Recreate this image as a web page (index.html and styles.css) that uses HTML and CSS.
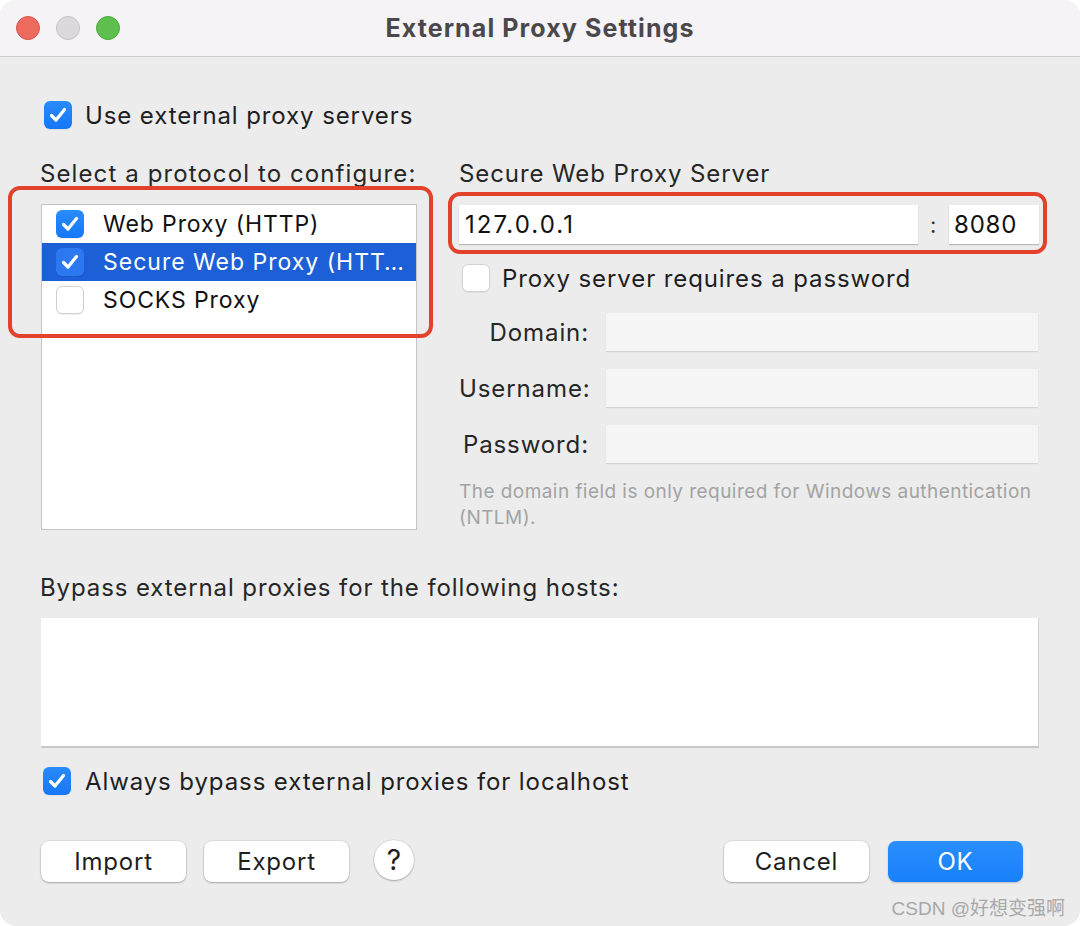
FILE: index.html
```html
<!DOCTYPE html>
<html lang="en">
<head>
    <meta charset="UTF-8">
    <meta name="viewport" content="width=device-width, initial-scale=1.0">
    <title>External Proxy Settings</title>
    <link rel="stylesheet" href="styles.css">
</head>
<body>
    <div class="window">
        <!-- Title bar -->
        <div class="titlebar">
            <div class="lights">
                <span class="light red"></span>
                <span class="light grey"></span>
                <span class="light green"></span>
            </div>
            <div class="title">External Proxy Settings</div>
        </div>

        <div class="content">
            <label class="check-row top-check">
                <span class="check on">
                    <svg viewBox="0 0 28 28"><path d="M7.5 14.5 L12 19 L20.5 8.5"/></svg>
                </span>
                Use external proxy servers
            </label>

            <div class="columns">
                <div class="left-col">
                    <div class="heading">Select a protocol to configure:</div>
                    <div class="protocol-list">
                        <div class="protocol">
                            <span class="check on">
                                <svg viewBox="0 0 28 28"><path d="M7.5 14.5 L12 19 L20.5 8.5"/></svg>
                            </span>
                            <span class="protocol-name">Web Proxy (HTTP)</span>
                        </div>
                        <div class="protocol selected">
                            <span class="check on">
                                <svg viewBox="0 0 28 28"><path d="M7.5 14.5 L12 19 L20.5 8.5"/></svg>
                            </span>
                            <span class="protocol-name">Secure Web Proxy (HTT…</span>
                        </div>
                        <div class="protocol">
                            <span class="check"></span>
                            <span class="protocol-name">SOCKS Proxy</span>
                        </div>
                    </div>
                </div>

                <div class="right-col">
                    <div class="heading">Secure Web Proxy Server</div>
                    <div class="server-row">
                        <div class="field host">127.0.0.1</div>
                        <span class="colon">:</span>
                        <div class="field port">8080</div>
                    </div>

                    <label class="check-row pass-check">
                        <span class="check"></span>
                        Proxy server requires a password
                    </label>

                    <div class="auth-grid">
                        <span class="auth-label">Domain:</span>
                        <div class="field dim"></div>
                        <span class="auth-label">Username:</span>
                        <div class="field dim"></div>
                        <span class="auth-label">Password:</span>
                        <div class="field dim"></div>
                    </div>

                    <p class="hint">The domain field is only required for Windows authentication (NTLM).</p>
                </div>
            </div>

            <div class="heading bypass-heading">Bypass external proxies for the following hosts:</div>
            <div class="bypass-box"></div>

            <label class="check-row local-check">
                <span class="check on">
                    <svg viewBox="0 0 28 28"><path d="M7.5 14.5 L12 19 L20.5 8.5"/></svg>
                </span>
                Always bypass external proxies for localhost
            </label>

            <div class="buttons">
                <div class="btn-group">
                    <button class="btn">Import</button>
                    <button class="btn">Export</button>
                    <button class="btn help">?</button>
                </div>
                <div class="btn-group">
                    <button class="btn">Cancel</button>
                    <button class="btn primary">OK</button>
                </div>
            </div>
        </div>

        <!-- annotations drawn over the dialog -->
        <div class="mark mark-list"></div>
        <div class="mark mark-server"></div>

        <div class="watermark">CSDN @好想变强啊</div>
    </div>
</body>
</html>
```

FILE: styles.css
```css
* {
    margin: 0;
    padding: 0;
    box-sizing: border-box;
}

body {
    background: #ffffff;
    font-family: 'Inter', 'Noto Sans', sans-serif;
    color: #1e1e1e;
    letter-spacing: 0.9px;
}

.window {
    position: relative;
    width: 1080px;
    height: 926px;
    background-color: #ececec;
    border-radius: 16px;
    overflow: hidden;
}

.titlebar {
    position: relative;
    height: 57px;
    background-color: #f6f3f6;
    border-bottom: 1px solid #cdcbcd;
    display: flex;
    align-items: center;
    justify-content: center;
}

.lights {
    position: absolute;
    left: 16px;
    top: 16px;
    display: flex;
    gap: 16px;
}

.light {
    width: 24px;
    height: 24px;
    border-radius: 50%;
}

.light.red {
    background-color: #ed6a5e;
    border: 1px solid #d75449;
}

.light.grey {
    background-color: #dcd8dc;
    border: 1px solid #c6c2c6;
}

.light.green {
    background-color: #5ebf4e;
    border: 1px solid #4aa93b;
}

.title {
    font-size: 25px;
    font-weight: 700;
    color: #4a484a;
    letter-spacing: 1.1px;
    margin-top: -1px;
}

.content {
    padding: 44px 41px 0 40px;
}

/* checkboxes */
.check-row {
    display: flex;
    align-items: center;
    gap: 13px;
    font-size: 24px;
    height: 28px;
}

.top-check {
    padding-left: 4px;
}

.check {
    width: 28px;
    height: 28px;
    flex: none;
    border-radius: 6px;
    background-color: #ffffff;
    border: 1px solid #cfcfcf;
    box-shadow: 0 1px 1px rgba(0, 0, 0, 0.06);
    display: flex;
}

.check.on {
    background: linear-gradient(#2a8bfb, #1577f6);
    border: none;
}

.check svg {
    width: 28px;
    height: 28px;
    fill: none;
    stroke: #ffffff;
    stroke-width: 3.2;
    stroke-linecap: round;
    stroke-linejoin: round;
}

.heading {
    font-size: 24px;
    line-height: 30px;
    color: #262626;
}

.left-col .heading {
    letter-spacing: 1.1px;
}

.columns {
    display: flex;
    gap: 42px;
    margin-top: 30px;
}

.left-col {
    width: 377px;
    flex: none;
}

.right-col {
    flex: 1;
}

.protocol-list {
    margin-top: 15px;
    margin-left: 1px;
    height: 326px;
    background-color: #ffffff;
    border: 1px solid #c4c4c4;
}

.protocol {
    height: 38px;
    display: flex;
    align-items: center;
    padding-left: 14px;
    gap: 19px;
    font-size: 23px;
    color: #111111;
}

.protocol.selected {
    background-color: #1d5fd6;
    color: #ffffff;
    letter-spacing: 1px;
}

.protocol.selected .check.on {
    background: #2c78f0;
}

.server-row {
    margin-top: 16px;
    display: flex;
    align-items: center;
}

.field {
    height: 39px;
    background-color: #ffffff;
    box-shadow: 0 1px 1px rgba(0, 0, 0, 0.22);
    font-size: 24px;
    line-height: 39px;
    padding-left: 6px;
    color: #111111;
}

.host {
    width: 459px;
    letter-spacing: 2.1px;
}

.colon {
    width: 31px;
    text-align: center;
    font-size: 22px;
    color: #333;
}

.port {
    width: 90px;
    letter-spacing: 0.8px;
    padding-left: 5px;
}

.pass-check {
    margin-top: 20px;
    padding-left: 3px;
    gap: 12px;
}

.pass-check .check {
    border-color: #d4d4d4;
}

.auth-grid {
    margin-top: 21px;
    display: grid;
    grid-template-columns: 130px 1fr;
    column-gap: 17px;
    row-gap: 18px;
    align-items: center;
    padding-right: 1px;
}

.auth-label {
    text-align: right;
    font-size: 24px;
    color: #262626;
}

.field.dim {
    height: 38px;
    background-color: #f5f5f5;
    box-shadow: 0 1px 1px rgba(0, 0, 0, 0.1);
}

.hint {
    margin-top: 16px;
    font-size: 19px;
    line-height: 26px;
    color: #a3a3a3;
    letter-spacing: 0.45px;
    padding-right: 2px;
}

.bypass-heading {
    margin-top: 42px;
}

.bypass-box {
    margin-top: 15px;
    margin-left: 1px;
    height: 130px;
    background-color: #ffffff;
    border-right: 1px solid #d2d2d2;
    border-bottom: 2px solid #c8c8c8;
}

.local-check {
    margin-top: 19px;
    padding-left: 3px;
    gap: 14px;
}

.buttons {
    margin-top: 46px;
    display: flex;
    justify-content: space-between;
    padding-left: 1px;
    padding-right: 16px;
}

.btn-group {
    display: flex;
    align-items: center;
    gap: 18px;
}

.btn {
    width: 145px;
    height: 41px;
    background-color: #ffffff;
    border: none;
    border-radius: 8px;
    box-shadow: 0 0 0 0.5px rgba(0, 0, 0, 0.12), 0 1px 2px rgba(0, 0, 0, 0.25);
    font-family: inherit;
    font-size: 24px;
    letter-spacing: 0.8px;
    color: #1e1e1e;
}

.btn.help {
    width: 40px;
    height: 40px;
    border-radius: 50%;
    margin-left: 7px;
    margin-top: -4px;
    font-size: 28px;
    letter-spacing: 0;
}

.btn.primary {
    width: 135px;
    margin-left: 1px;
    background: linear-gradient(#2a8efc, #1780fa);
    color: #ffffff;
    box-shadow: 0 1px 2px rgba(0, 0, 0, 0.2);
}

.mark {
    position: absolute;
    border: 4px solid #e4412c;
    border-radius: 12px;
}

.mark-list {
    left: 8px;
    top: 186px;
    width: 425px;
    height: 152px;
}

.mark-server {
    left: 448px;
    top: 192px;
    width: 599px;
    height: 62px;
}

.watermark {
    position: absolute;
    right: 15px;
    bottom: 6px;
    font-family: 'Liberation Sans', 'Noto Sans CJK SC', sans-serif;
    font-size: 19px;
    letter-spacing: 0;
    color: #a8a8a8;
}
```
